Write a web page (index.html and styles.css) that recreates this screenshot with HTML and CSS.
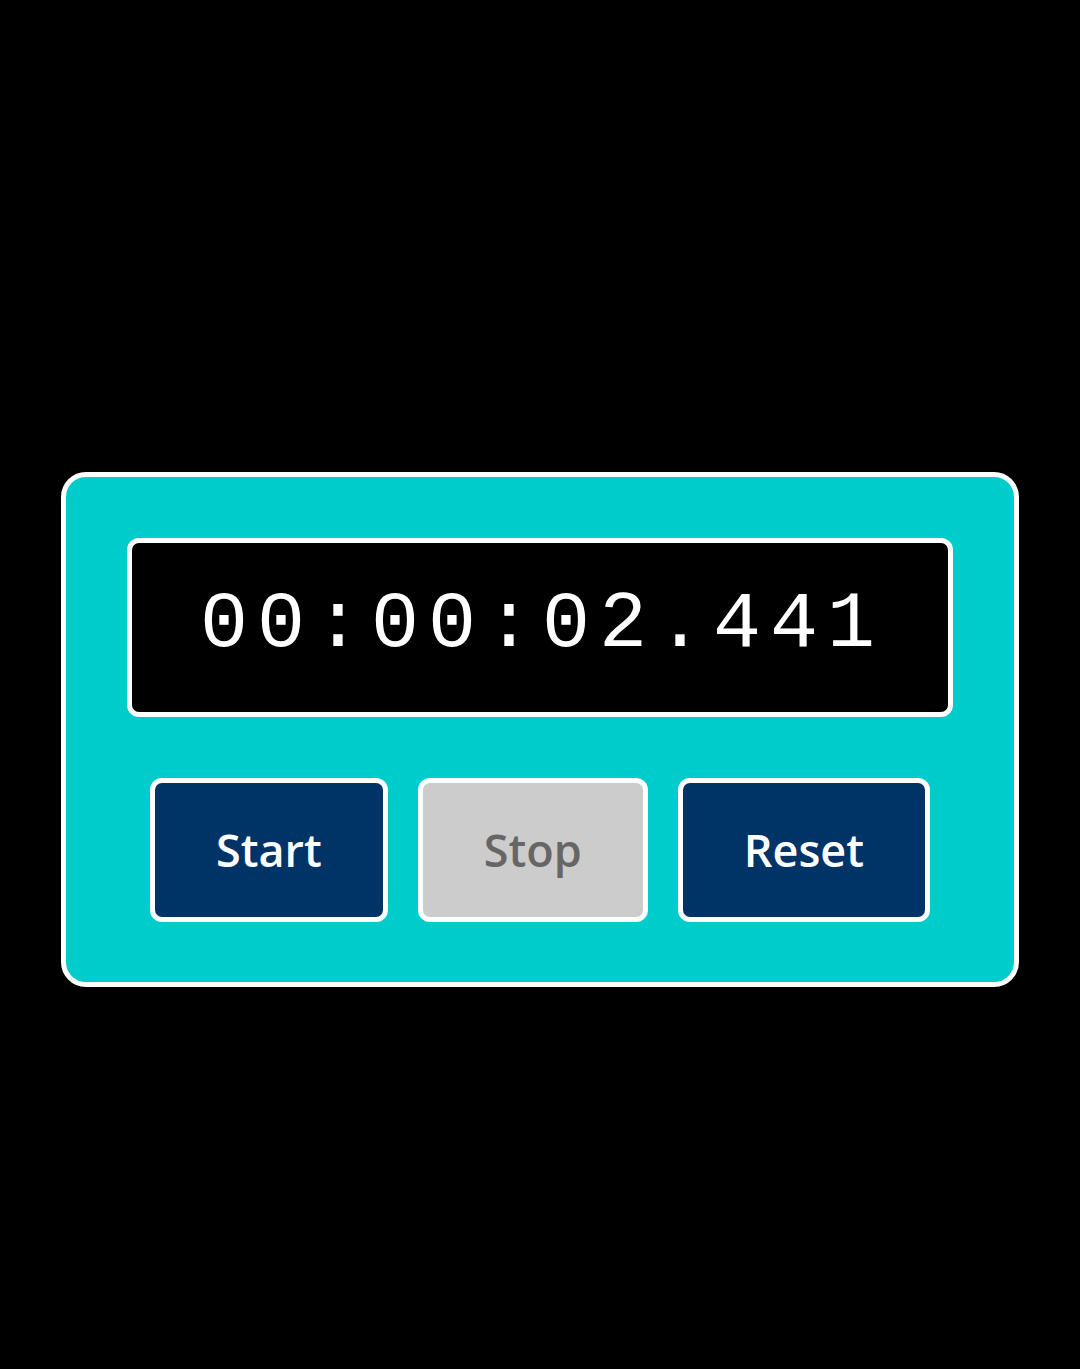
FILE: index.html
```html
<!DOCTYPE html>
<html lang="en">
<head>
<meta charset="utf-8">
<title>Stopwatch</title>
<link rel="stylesheet" href="styles.css">
</head>
<body>
  <main class="stopwatch">
    <div class="display">00:00:02.441</div>
    <div class="controls">
      <button class="btn btn-active">Start</button>
      <button class="btn btn-disabled" disabled>Stop</button>
      <button class="btn btn-active">Reset</button>
    </div>
  </main>
</body>
</html>
```
FILE: styles.css
```css
html, body {
  margin: 0;
  background: #000;
}
body {
  padding-top: 472px;
  min-height: 1369px;
  box-sizing: border-box;
}
.stopwatch {
  width: 958px;
  margin: 0 auto;
  box-sizing: border-box;
  background: #00cccc;
  border: 5px solid #fff;
  border-radius: 25px;
  padding: 61px 61px 60px;
  display: flex;
  flex-direction: column;
  gap: 61px;
}
.display {
  background: #000;
  border: 5px solid #fff;
  border-radius: 12px;
  color: #fff;
  font-family: "Liberation Mono", "Courier New", monospace;
  font-size: 80px;
  line-height: 91px;
  letter-spacing: 9px;
  text-align: center;
  padding: 36px 0 42px 4px;
}
.controls {
  display: flex;
  justify-content: center;
  gap: 30px;
}
.btn {
  font-family: "Open Sans", "Noto Sans", sans-serif;
  font-weight: 600;
  font-size: 45px;
  line-height: 61px;
  padding: 36px 61px 37px;
  border: 5px solid #fff;
  border-radius: 12px;
  cursor: pointer;
}
.btn-active {
  background: #003366;
  color: #fff;
}
.btn-disabled {
  background: #cccccc;
  color: #666666;
  cursor: not-allowed;
}
```
